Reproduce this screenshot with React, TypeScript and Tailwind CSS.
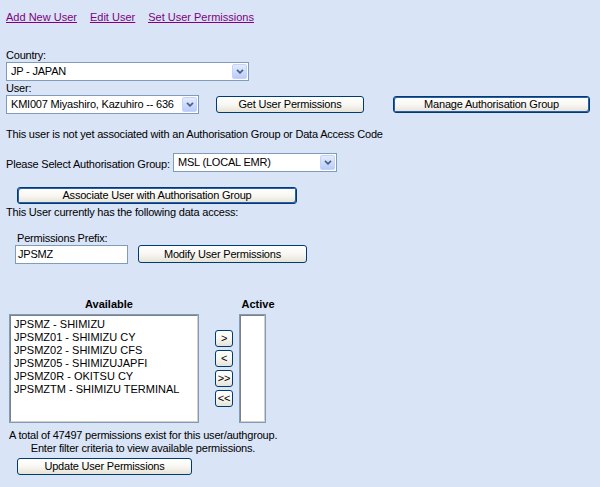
import type { ReactNode } from 'react';

function XpButton({ className, children, primary }: { className: string; children: ReactNode; primary?: boolean }) {
  return (
    <button
      className={`flex items-center justify-center rounded-[3px] border border-[#003c74] bg-linear-to-b from-white via-[#f8f7f2] to-[#e6e3d6] text-[11px] leading-none text-black ${
        primary ? 'shadow-[inset_1px_1px_0_#2a5ea8,inset_-1px_-1px_0_#2a5ea8]' : ''
      } ${className}`}
    >
      {children}
    </button>
  );
}

function Combo({ value, className }: { value: string; className: string }) {
  return (
    <div className={`flex h-[19px] items-center border border-[#7f9db9] bg-white pr-[1px] ${className}`}>
      <span className="pl-[4px] whitespace-nowrap">{value}</span>
      <span className="ml-auto flex h-[15px] w-[15px] items-center justify-center rounded-[2px] border border-[#c3d3fd] bg-linear-to-b from-[#e3ebfe] to-[#b9cdf9]">
        <svg width="8" height="5" viewBox="0 0 8 5">
          <polyline points="1,0.8 4,3.8 7,0.8" fill="none" stroke="#4d6185" strokeWidth="1.8" />
        </svg>
      </span>
    </div>
  );
}

function ListBox({ className, items }: { className: string; items: string[] }) {
  return (
    <div className={`border border-[#7f9db9] bg-white ${className}`}>
      <div className="h-full border-t border-l border-[#808080] border-r-[#d4d0c8] border-b-[#d4d0c8] border-r border-b px-[3px] pt-[2px] tracking-normal">
        {items.map((it) => (
          <div key={it} className="leading-[13px] whitespace-nowrap">
            {it}
          </div>
        ))}
      </div>
    </div>
  );
}

export default function App() {
  const available = [
    'JPSMZ - SHIMIZU',
    'JPSMZ01 - SHIMIZU CY',
    'JPSMZ02 - SHIMIZU CFS',
    'JPSMZ05 - SHIMIZUJAPFI',
    'JPSMZ0R - OKITSU CY',
    'JPSMZTM - SHIMIZU TERMINAL',
  ];

  return (
    <div className="h-[487px] w-[600px] overflow-hidden bg-[#d9e4f6] pl-[6px] pt-[11px] font-['Liberation_Sans',Arial,sans-serif] text-[11px] leading-[13px] tracking-[-0.2px] text-black">
      {/* nav links */}
      <div className="flex gap-[13px] tracking-normal text-[#800080] underline">
        <a href="#">Add New User</a>
        <a href="#">Edit User</a>
        <a href="#">Set User Permissions</a>
      </div>

      <div className="mt-[25px]">Country:</div>
      <Combo value="JP - JAPAN" className="w-[243px]" />

      <div className="mt-[1px]">User:</div>
      <div className="flex items-start">
        <Combo value="KMI007 Miyashiro, Kazuhiro -- 636" className="w-[193px]" />
        <XpButton className="mt-[1px] ml-[17px] h-[17px] w-[148px]">Get User Permissions</XpButton>
        <XpButton primary className="mt-[1px] ml-[29px] h-[17px] w-[197px]">
          Manage Authorisation Group
        </XpButton>
      </div>

      <div className="mt-[14px]">This user is not yet associated with an Authorisation Group or Data Access Code</div>

      <div className="mt-[12px] flex items-start">
        <span className="mt-[5px] w-[167px] whitespace-nowrap">Please Select Authorisation Group:</span>
        <Combo value="MSL (LOCAL EMR)" className="w-[164px]" />
      </div>

      <XpButton primary className="mt-[15px] ml-[11px] h-[17px] w-[280px]">
        Associate User with Authorisation Group
      </XpButton>

      <div className="mt-[2px]">This User currently has the following data access:</div>

      <div className="mt-[13px] ml-[9px]">
        <div className="pl-[2px]">Permissions Prefix:</div>
        <div className="flex items-start">
          <div className="flex h-[19px] w-[113px] items-center border border-[#7f9db9] bg-white pl-[2px]">JPSMZ</div>
          <XpButton className="ml-[10px] h-[18px] w-[169px]">Modify User Permissions</XpButton>
        </div>
      </div>

      {/* available / active permissions */}
      <div className="mt-[34px] ml-[3px] grid w-[268px] grid-cols-[200px_30px_38px]">
        <div className="text-center font-bold tracking-normal">Available</div>
        <div />
        <div className="text-center font-bold tracking-normal">Active</div>

        <ListBox className="mt-[3px] h-[109px] w-[190px]" items={available} />
        <div className="mt-[3px] flex flex-col items-center justify-center gap-[3px]">
          <XpButton className="h-[17px] w-[18px]">&gt;</XpButton>
          <XpButton className="h-[17px] w-[18px]">&lt;</XpButton>
          <XpButton className="h-[17px] w-[18px]">&gt;&gt;</XpButton>
          <XpButton className="h-[17px] w-[18px]">&lt;&lt;</XpButton>
        </div>
        <ListBox className="mt-[3px] h-[109px] w-[27px]" items={[]} />

        <div className="col-span-3 mt-[6px] text-center whitespace-nowrap">
          A total of 47497 permissions exist for this user/authgroup.
          <br />
          Enter filter criteria to view available permissions.
        </div>
      </div>

      <XpButton className="mt-[3px] ml-[11px] h-[17px] w-[175px]">Update User Permissions</XpButton>
    </div>
  );
}
